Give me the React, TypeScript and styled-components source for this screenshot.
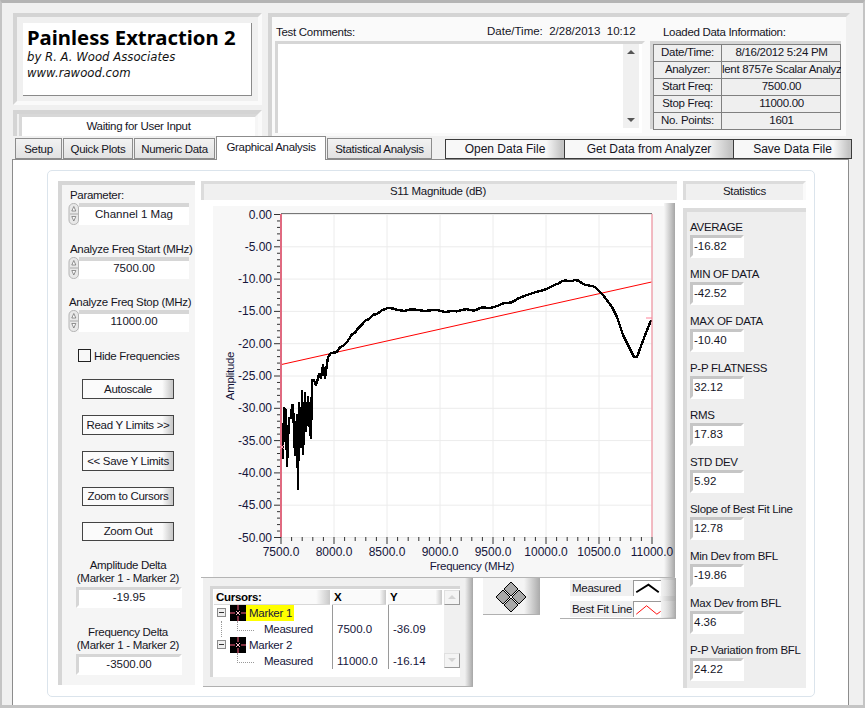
import React from 'react'
import styled, { createGlobalStyle } from 'styled-components'

const GlobalStyle = createGlobalStyle`
  html, body { margin: 0; padding: 0; background: #f0f0f0; }
  * { box-sizing: border-box; }
  body { font-family: "Liberation Sans", Arial, sans-serif; font-size: 11.5px; letter-spacing: -0.3px; color: #15151f; }
`

const Window = styled.div`
  width: 865px;
  height: 708px;
  overflow: hidden;
  background: #f0f0f0;
  border-top: 3px solid #b4b4b4;
  border-left: 2px solid #c4c4c4;
  border-right: 2px solid #c4c4c4;
  border-bottom: 3px solid #c4c4c4;
  padding: 10px 0 0 10px;
  display: flex;
  flex-direction: column;
`

const TopRow = styled.div`
  display: flex;
  gap: 6px;
  height: 123px;
  margin-left: 1px;
`

const LeftStack = styled.div`
  width: 249px;
  display: flex;
  flex-direction: column;
  gap: 5px;
`

const LogoPanel = styled.div`
  height: 92px;
  border: 4px solid;
  border-color: #d4d4d4 #fafafa #fafafa #d4d4d4;
  padding: 6px 6px 5px 6px;
`

const LogoCard = styled.div`
  height: 100%;
  background: #fff;
  border-right: 1px solid #8a8a8a;
  border-bottom: 1px solid #8a8a8a;
  padding: 2px 4px;
`

const LogoTitle = styled.div`
  font-family: "Noto Sans", sans-serif;
  font-weight: 700;
  font-size: 20.3px;
  letter-spacing: 0;
  height: 24px;
  line-height: 24px;
  color: #000;
  white-space: nowrap;
`

const LogoLine = styled.div`
  font-family: "DejaVu Sans", sans-serif;
  font-style: italic;
  font-size: 11.7px;
  letter-spacing: 0;
  line-height: 16px;
  color: #111;
`

const StatusPanel = styled.div`
  flex: 1;
  border: 4px solid;
  border-bottom-width: 0;
  border-color: #d4d4d4 #fafafa #fafafa #d4d4d4;
  padding-left: 2px;
`

const StatusField = styled.div`
  height: 100%;
  background: #fff;
  border: 3px solid;
  border-bottom-width: 0;
  border-color: #d8d8d8 #f6f6f6 #fff #d8d8d8;
  text-align: center;
  line-height: 18px;
`

const InfoPanel = styled.div`
  width: 582px;
  background: #fafafa;
  border: 4px solid;
  border-bottom-width: 0;
  border-color: #d4d4d4 #f0f0f0 #f0f0f0 #d4d4d4;
  padding: 3px 5px 0 3px;
`

const InfoHeader = styled.div`
  display: flex;
  height: 21px;
  align-items: center;
`

const CommentsLabel = styled.span`
  width: 211px;
  margin-left: 1px;
  padding-top: 3px;
`

const DateStamp = styled.span`
  width: 176px;
  letter-spacing: 0;
  white-space: pre;
`

const LoadedLabel = styled.span`
  padding-top: 3px;
`

const InfoBody = styled.div`
  display: flex;
  gap: 5px;
`

const Comments = styled.div`
  width: 370px;
  height: 92px;
  background: #fff;
  border: 3px solid;
  border-bottom-width: 0;
  border-color: #d6d6d6 #fafafa #fff #d6d6d6;
  display: flex;
  justify-content: flex-end;
  padding-right: 3px;
`

const CommentScroll = styled.div`
  width: 16px;
  height: 84px;
  background: #f0f0f0;
  display: flex;
  flex-direction: column;
  justify-content: space-between;
  align-items: center;
  padding: 6px 0;
`

const ArrowUp = styled.i<{ $pale?: boolean }>`
  width: 0;
  height: 0;
  border-left: 4px solid transparent;
  border-right: 4px solid transparent;
  border-bottom: 4px solid ${p => (p.$pale ? '#d4d4d4' : '#555')};
`

const ArrowDown = styled.i<{ $pale?: boolean }>`
  width: 0;
  height: 0;
  border-left: 4px solid transparent;
  border-right: 4px solid transparent;
  border-top: 4px solid ${p => (p.$pale ? '#d4d4d4' : '#555')};
`

const InfoTableFrame = styled.div`
  width: 191px;
  height: 88px;
  border: 3px solid;
  border-right-width: 0;
  border-bottom-width: 0;
  border-color: #d6d6d6 transparent transparent #d6d6d6;
`

const InfoTable = styled.div`
  display: grid;
  grid-template-columns: 68px 120px;
  grid-auto-rows: 17px;
  background: #efefef;
  border-bottom: 1px solid #808080;
  border-right: 1px solid #808080;
`

const InfoCell = styled.div`
  border-top: 1px solid #808080;
  border-left: 1px solid #808080;
  text-align: center;
  line-height: 15px;
  white-space: nowrap;
  overflow: hidden;
`

const TabRow = styled.div`
  display: flex;
  height: 23px;
  padding-left: 3px;
  align-items: flex-end;
`

const Tab = styled.div<{ $active?: boolean; $w: number }>`
  width: ${p => p.$w}px;
  height: ${p => (p.$active ? 24 : 21)}px;
  margin-right: 1px;
  margin-bottom: ${p => (p.$active ? -1 : 0)}px;
  background: ${p => (p.$active ? '#fff' : 'linear-gradient(#f2f2f2, #e2e2e2)')};
  border: 1px solid #8c8c8c;
  border-bottom-width: ${p => (p.$active ? 0 : 1)}px;
  text-align: center;
  line-height: 20px;
  position: relative;
  z-index: ${p => (p.$active ? 2 : 0)};
`

const FileButtons = styled.div`
  display: flex;
  margin-left: 12px;
  height: 20px;
  position: relative;
  z-index: 3;
`

const FileButton = styled.div<{ $w: number }>`
  width: ${p => p.$w}px;
  background: linear-gradient(90deg, #f8f8f8 85%, #c4c4c4 98%);
  border: 1px solid #3c3c3c;
  margin-right: -1px;
  text-align: center;
  font-size: 12px;
  letter-spacing: 0;
  line-height: 19px;
`

const TabPage = styled.div`
  width: 837px;
  height: 547px;
  background: #fff;
  border: 1px solid #8c8c8c;
  border-bottom: 0;
  padding: 10px 33px 0 34px;
`

const InnerFrame = styled.div`
  height: 527px;
  border: 1px solid #dbe4ec;
  border-radius: 5px;
  padding: 10px 9px 0 10px;
  display: grid;
  grid-template-columns: 137px 476px 123px;
  column-gap: 6px;
`

const ControlColumn = styled.div`
  height: 504px;
  background: #f5f5f5;
  border-top: 4px solid #d6d6d6;
  border-left: 4px solid #d6d6d6;
  padding: 3px 0 0 6px;
  display: flex;
  flex-direction: column;
`

const ControlLabel = styled.div<{ $mt?: number; $ml?: number }>`
  height: 15px;
  line-height: 15px;
  margin-top: ${p => p.$mt ?? 0}px;
  margin-left: ${p => p.$ml ?? 2}px;
  white-space: nowrap;
`

const RingControl = styled.div`
  display: flex;
  height: 22px;
`

const RingValue = styled.div`
  width: 110px;
  background: #fff;
  border-top: 4px solid #d6d6d6;
  text-align: center;
  line-height: 15px;
  margin-left: -1px;
  letter-spacing: 0;
`

const CheckRow = styled.label`
  display: flex;
  align-items: center;
  margin: 17px 0 0 10px;
  height: 14px;
  white-space: nowrap;
`

const CheckBox = styled.i`
  width: 13px;
  height: 13px;
  border: 1px solid #222;
  background: #f8f8f8;
  margin-right: 3px;
`

const SideButton = styled.div<{ $mt: number; $h?: number }>`
  width: 92px;
  height: ${p => p.$h ?? 20}px;
  margin: ${p => p.$mt}px 0 0 14px;
  border: 1px solid #444;
  background: linear-gradient(90deg, #fbfbfb 88%, #c9c9c9 99%);
  text-align: center;
  line-height: ${p => (p.$h ?? 20) - 2}px;
  white-space: nowrap;
`

const DeltaLabel = styled.div<{ $mt: number }>`
  margin-top: ${p => p.$mt}px;
  width: 120px;
  text-align: center;
  line-height: 13px;
  white-space: nowrap;
`

const DeltaField = styled.div`
  width: 106px;
  height: 21px;
  margin: 2px 0 0 8px;
  background: #fff;
  border: 3px solid;
  border-color: #d6d6d6 #fff #fff #d6d6d6;
  text-align: center;
  line-height: 15px;
  letter-spacing: 0;
`

const CenterColumn = styled.div`
  display: flex;
  flex-direction: column;
`

const TitleBar = styled.div<{ $pr?: number }>`
  height: 19px;
  background: #f0f0f0;
  border-top: 3px solid #dcdcdc;
  border-left: 3px solid #dcdcdc;
  padding-right: ${p => p.$pr ?? 0}px;
  text-align: center;
  line-height: 15px;
`

const PlotSvg = styled.svg`
  display: block;
  margin-top: 3px;
  font-family: "Liberation Sans", Arial, sans-serif;
  font-size: 12px;
  letter-spacing: 0;
  fill: #15153a;
`

const AxisTitle = styled.text`
  font-size: 11.5px;
  letter-spacing: -0.3px;
`

const BottomRow = styled.div`
  display: flex;
  margin-left: 2px;
`

const CursorPanel = styled.div`
  width: 270px;
  height: 109px;
  background: linear-gradient(90deg, #f0f0f0 97%, #a6a6a6 100%);
  border-bottom: 1px solid #b0b0b0;
  padding: 8px 13px 9px 7px;
`

const CursorBox = styled.div`
  height: 100%;
  background: #fff;
  border-top: 3px solid #d6d6d6;
  border-left: 3px solid #d6d6d6;
  display: flex;
  padding: 1px 0 0 1px;
`

const CursorTable = styled.div`
  width: 230px;
  display: grid;
  grid-template-columns: 118px 56px 56px;
  grid-template-rows: 15px repeat(4, 16px);
`

const HeaderCell = styled.div`
  background: linear-gradient(90deg, #fafafa 88%, #c8c8c8 100%);
  border-bottom: 1px solid #d8d8d8;
  font-weight: 700;
  line-height: 14px;
  padding-left: 2px;
  margin-right: 2px;
  color: #000;
`

const TreeCell = styled.div`
  display: flex;
  align-items: center;
  height: 16px;
  color: #15153a;
  white-space: nowrap;
`

const ValueCell = styled.div`
  border-left: 1px solid #9a9a9a;
  padding-left: 4px;
  line-height: 16px;
  height: 16px;
  letter-spacing: 0;
  color: #15153a;
`

const Expander = styled.i`
  width: 9px;
  height: 9px;
  border: 1px solid #8a8a8a;
  background: #eee;
  margin: 0 4px 0 3px;
  display: flex;
  align-items: center;
  justify-content: center;
  &::before {
    content: '';
    width: 5px;
    height: 1px;
    background: #333;
  }
`

const Rail = styled.i<{ $show?: boolean }>`
  width: 16px;
  height: 16px;
  margin-left: 7px;
  border-left: 1px dotted ${p => (p.$show ? '#999' : 'transparent')};
`

const Connector = styled.i`
  width: 17px;
  height: 10px;
  margin: -6px 10px 0 0;
  border-left: 1px dotted #999;
  border-bottom: 1px dotted #999;
`

const MarkerName = styled.span<{ $on?: boolean }>`
  background: ${p => (p.$on ? '#ffff00' : 'transparent')};
  padding: 0 2px 0 3px;
  line-height: 16px;
`

const CursorScroll = styled.div`
  width: 16px;
  height: 78px;
  background: #f0f0f0;
  display: flex;
  flex-direction: column;
  justify-content: space-between;
  align-items: center;
`

const ScrollCap = styled.div`
  width: 16px;
  height: 15px;
  background: #f4f4f4;
  border: 1px solid #e0e0e0;
  border-right-color: #999;
  border-bottom-color: #999;
  display: flex;
  align-items: center;
  justify-content: center;
`

const PadButton = styled.div`
  width: 57px;
  height: 37px;
  margin-left: 10px;
  background: linear-gradient(90deg, #f4f4f4 72%, #aaa 100%);
  border-bottom: 1px solid #b0b0b0;
  display: flex;
  justify-content: center;
  padding-right: 2px;
`

const Legend = styled.div`
  width: 116px;
  height: 41px;
  margin-left: 20px;
  background: linear-gradient(90deg, #fff 85%, #a6a6a6 100%);
  border-bottom: 1px solid #b0b0b0;
  padding: 2px 0 0 10px;
  display: flex;
  flex-direction: column;
  gap: 5px;
`

const LegendRow = styled.div`
  display: flex;
  height: 16px;
  align-items: center;
  white-space: nowrap;
  background: linear-gradient(90deg, #f0f0f0 80%, transparent 100%);
`

const LegendName = styled.span`
  width: 63px;
  padding-left: 2px;
`

const Swatch = styled.svg`
  display: block;
  border-top: 1px solid #999;
  border-left: 1px solid #999;
  background: #fff;
`

const StatsColumn = styled.div`
  display: flex;
  flex-direction: column;
`

const StatsTitle = styled(TitleBar)`
  margin-bottom: 8px;
  border-right: 3px solid #fafafa;
`

const StatsPanel = styled.div`
  height: 480px;
  background: #eee;
  border-top: 4px solid #dcdcdc;
  border-left: 4px solid #dcdcdc;
  padding: 8px 0 0 3px;
`

const StatLabel = styled.div`
  height: 15px;
  line-height: 15px;
  white-space: nowrap;
`

const StatField = styled.div`
  width: 54px;
  height: 23px;
  margin-bottom: 9px;
  background: #fff;
  border: 3px solid;
  border-color: #c6c6c6 #fff #fff #c6c6c6;
  padding-left: 1px;
  line-height: 17px;
  letter-spacing: 0;
`

const yTicks = Array.from({ length: 51 }, (_, i) => i)
const xTicks = Array.from({ length: 36 }, (_, i) => i)
const yPos = (db: number) => 214.5 + db * 6.46
const xPos = (i: number) => 281 + i * 10.6

const noisy = [
  [282, 430], [283, 458], [284, 408], [286, 410], [287, 466], [289, 418], [291, 418], [292, 405], [293, 405],
  [295, 455], [297, 415], [298, 489], [299, 403], [301, 447], [302, 391], [303, 454], [305, 393], [306, 431],
  [308, 397], [310, 432], [311, 438], [312, 380], [314, 380], [316, 385], [318, 378], [319, 374], [321, 378],
  [323, 365], [325, 378], [328, 357], [331, 353], [332, 353], [337, 352],
]
const smooth = [
  [340, 347], [343, 346], [347, 342], [352, 335], [355, 333], [358, 328], [361, 325], [366, 320], [369, 319],
  [373, 315], [377, 314], [382, 311], [387, 309], [394, 308], [400, 310], [405, 310], [412, 310],
  [430, 310], [443, 311], [450, 312], [460, 310], [473, 310],
  [483, 308], [493, 307], [498, 305], [508, 303], [518, 299], [535, 293], [547, 288], [555, 284],
  [565, 281], [575, 280], [582, 283], [595, 287], [603, 295], [612, 307], [617, 317], [623, 335], [634, 357], [637, 357],
  [644, 338], [651, 320],
]

// small ripple on the flat part of the trace, the data is never quite smooth
const rippled: number[][] = []
smooth.forEach((p, i) => {
  const next = smooth[i + 1]
  if (!next) {
    rippled.push(p)
    return
  }
  const steps = Math.max(1, Math.round((next[0] - p[0]) / 3))
  for (let s = 0; s < steps; s++) {
    const x = p[0] + ((next[0] - p[0]) * s) / steps
    const y = p[1] + ((next[1] - p[1]) * s) / steps
    const jitter = x < 590 ? Math.sin(x * 2.3) * 0.8 : 0
    rippled.push([x, y + jitter])
  }
})
const trace = [...noisy, ...rippled].map(p => p.join(',')).join(' ')

function Spinner() {
  return (
    <svg width="12" height="22" viewBox="0 0 12 22" style={{ flex: 'none' }}>
      <rect x="1" y="0.5" width="9.5" height="21" rx="4.5" fill="#e8e8e8" stroke="#b4b4b4" />
      <path d="M5.8 3.5 3.8 8h4zM5.8 18 3.8 13.5h4z" fill="#fff" stroke="#666" strokeWidth="0.7" />
      <line x1="2" y1="11" x2="10" y2="11" stroke="#aaa" />
    </svg>
  )
}

function MarkerIcon() {
  return (
    <svg width="16" height="16" viewBox="0 0 16 16" style={{ flex: 'none' }}>
      <rect width="16" height="16" fill="#000" />
      <path d="M8 0v5M8 11v5M0 8h5M11 8h5" stroke="#ff6080" />
      <path d="M6 6l4 4M10 6l-4 4" stroke="#ffc0cc" />
    </svg>
  )
}

function Plot() {
  return (
    <PlotSvg width="476" height="375" viewBox="201 203 476 375">
      <rect x="201" y="203" width="476" height="375" fill="#fff" />
      <rect x="213" y="206" width="464" height="372" fill="#f7f7f7" />
      <defs>
        <linearGradient id="edge" x1="0" x2="1" y1="0" y2="0">
          <stop offset="0" stopColor="#f7f7f7" />
          <stop offset="1" stopColor="#a6a6a6" />
        </linearGradient>
      </defs>
      <rect x="664" y="203" width="11" height="375" fill="url(#edge)" />
      <rect x="675" y="203" width="2" height="375" fill="#fff" />
      <rect x="201" y="577" width="474" height="1" fill="#b4b4b4" />
      <rect x="281" y="214" width="371" height="323" fill="#fff" />
      {Array.from({ length: 11 }, (_, i) => (
        <line key={i} x1="281" x2="652" y1={yPos(i * 5)} y2={yPos(i * 5)} stroke="#ececec" />
      ))}
      {Array.from({ length: 8 }, (_, i) => (
        <line key={i} x1={281 + i * 53} x2={281 + i * 53} y1="214" y2="537" stroke="#ececec" />
      ))}
      <line x1="281" x2="652" y1="213.5" y2="213.5" stroke="#777" />
      {yTicks.map(i => (
        <line key={i} x1={i % 5 === 0 ? 274 : 277} x2="281" y1={yPos(i)} y2={yPos(i)} stroke="#333" />
      ))}
      {xTicks.map(i => (
        <line key={i} x1={xPos(i)} x2={xPos(i)} y1="537" y2={i % 5 === 0 ? 544 : 541} stroke="#333" />
      ))}
      {Array.from({ length: 11 }, (_, i) => (
        <text key={i} x="272" y={yPos(i * 5) + 4} textAnchor="end">
          {i === 0 ? '0.00' : `-${(i * 5).toFixed(2)}`}
        </text>
      ))}
      {Array.from({ length: 8 }, (_, i) => (
        <text key={i} x={281 + i * 53} y="556" textAnchor="middle">
          {(7500 + i * 500).toFixed(1)}
        </text>
      ))}
      <AxisTitle x="472" y="570" textAnchor="middle">Frequency (MHz)</AxisTitle>
      <AxisTitle transform="translate(234 376) rotate(-90)" textAnchor="middle">Amplitude</AxisTitle>
      <line x1="281.5" x2="651.5" y1="364.5" y2="282" stroke="#ff0000" strokeWidth="1" />
      <polyline points={trace} fill="none" stroke="#000" strokeWidth="2.4" strokeLinejoin="round" shapeRendering="crispEdges" />
      <line x1="281" x2="281" y1="214" y2="537" stroke="#e06a80" strokeWidth="2" />
      <line x1="652" x2="652" y1="214" y2="537" stroke="#f08090" />
      <path d="M280 445l4 4M284 445l-4 4" stroke="#ff9ab0" />
      <path d="M646 318h6" stroke="#ff8098" />
    </PlotSvg>
  )
}

const stats = [
  ['AVERAGE', '-16.82'],
  ['MIN OF DATA', '-42.52'],
  ['MAX OF DATA', '-10.40'],
  ['P-P FLATNESS', '32.12'],
  ['RMS', '17.83'],
  ['STD DEV', '5.92'],
  ['Slope of Best Fit Line', '12.78'],
  ['Min Dev from BFL', '-19.86'],
  ['Max Dev from BFL', '4.36'],
  ['P-P Variation from BFL', '24.22'],
]

const loaded = [
  ['Date/Time:', '8/16/2012 5:24 PM'],
  ['Analyzer:', 'lent 8757e Scalar Analyz'],
  ['Start Freq:', '7500.00'],
  ['Stop Freq:', '11000.00'],
  ['No. Points:', '1601'],
]

export default function App() {
  return (
    <Window>
      <GlobalStyle />
      <TopRow>
        <LeftStack>
          <LogoPanel>
            <LogoCard>
              <LogoTitle>Painless Extraction 2</LogoTitle>
              <LogoLine>by R. A. Wood Associates</LogoLine>
              <LogoLine>www.rawood.com</LogoLine>
            </LogoCard>
          </LogoPanel>
          <StatusPanel>
            <StatusField>Waiting for User Input</StatusField>
          </StatusPanel>
        </LeftStack>
        <InfoPanel>
          <InfoHeader>
            <CommentsLabel>Test Comments:</CommentsLabel>
            <DateStamp>Date/Time:  2/28/2013  10:12</DateStamp>
            <LoadedLabel>Loaded Data Information:</LoadedLabel>
          </InfoHeader>
          <InfoBody>
            <Comments>
              <CommentScroll>
                <ArrowUp />
                <ArrowDown />
              </CommentScroll>
            </Comments>
            <InfoTableFrame>
              <InfoTable>
                {loaded.map(([k, v]) => (
                  <React.Fragment key={k}>
                    <InfoCell>{k}</InfoCell>
                    <InfoCell>{v}</InfoCell>
                  </React.Fragment>
                ))}
              </InfoTable>
            </InfoTableFrame>
          </InfoBody>
        </InfoPanel>
      </TopRow>
      <TabRow>
        <Tab $w={47}>Setup</Tab>
        <Tab $w={70}>Quick Plots</Tab>
        <Tab $w={81}>Numeric Data</Tab>
        <Tab $w={110} $active>Graphical Analysis</Tab>
        <Tab $w={105}>Statistical Analysis</Tab>
        <FileButtons>
          <FileButton $w={120}>Open Data File</FileButton>
          <FileButton $w={170}>Get Data from Analyzer</FileButton>
          <FileButton $w={119}>Save Data File</FileButton>
        </FileButtons>
      </TabRow>
      <TabPage>
        <InnerFrame>
          <ControlColumn>
            <ControlLabel>Parameter:</ControlLabel>
            <RingControl>
              <Spinner />
              <RingValue>Channel 1 Mag</RingValue>
            </RingControl>
            <ControlLabel $mt={17} $ml={2}>Analyze Freq Start (MHz)</ControlLabel>
            <RingControl>
              <Spinner />
              <RingValue>7500.00</RingValue>
            </RingControl>
            <ControlLabel $mt={16} $ml={1}>Analyze Freq Stop (MHz)</ControlLabel>
            <RingControl>
              <Spinner />
              <RingValue>11000.00</RingValue>
            </RingControl>
            <CheckRow>
              <CheckBox />
              Hide Frequencies
            </CheckRow>
            <SideButton $mt={16}>Autoscale</SideButton>
            <SideButton $mt={16}>Read Y Limits &gt;&gt;</SideButton>
            <SideButton $mt={16}>&lt;&lt; Save Y Limits</SideButton>
            <SideButton $mt={16} $h={19}>Zoom to Cursors</SideButton>
            <SideButton $mt={16} $h={19}>Zoom Out</SideButton>
            <DeltaLabel $mt={18}>Amplitude Delta<br />(Marker 1 - Marker 2)</DeltaLabel>
            <DeltaField>-19.95</DeltaField>
            <DeltaLabel $mt={18}>Frequency Delta<br />(Marker 1 - Marker 2)</DeltaLabel>
            <DeltaField>-3500.00</DeltaField>
          </ControlColumn>
          <CenterColumn>
            <TitleBar $pr={5}>S11 Magnitude (dB)</TitleBar>
            <Plot />
            <BottomRow>
              <CursorPanel>
                <CursorBox>
                  <CursorTable>
                    <HeaderCell>Cursors:</HeaderCell>
                    <HeaderCell>X</HeaderCell>
                    <HeaderCell>Y</HeaderCell>
                    <TreeCell><Expander /><MarkerIcon /><MarkerName $on>Marker 1</MarkerName></TreeCell>
                    <ValueCell />
                    <ValueCell />
                    <TreeCell><Rail $show /><Connector />Measured</TreeCell>
                    <ValueCell>7500.0</ValueCell>
                    <ValueCell>-36.09</ValueCell>
                    <TreeCell><Expander /><MarkerIcon /><MarkerName>Marker 2</MarkerName></TreeCell>
                    <ValueCell />
                    <ValueCell />
                    <TreeCell><Rail /><Connector />Measured</TreeCell>
                    <ValueCell>11000.0</ValueCell>
                    <ValueCell>-16.14</ValueCell>
                  </CursorTable>
                  <CursorScroll>
                    <ScrollCap><ArrowUp $pale /></ScrollCap>
                    <ScrollCap><ArrowDown $pale /></ScrollCap>
                  </CursorScroll>
                </CursorBox>
              </CursorPanel>
              <PadButton>
                <svg width="32" height="32" viewBox="0 0 32 32" style={{ marginTop: 3 }}>
                  <g fill="#a8a8a8" stroke="#000" strokeWidth="1">
                    <path d="M16 1l7 7-7 7-7-7z" />
                    <path d="M8 9l7 7-7 7-7-7z" />
                    <path d="M24 9l7 7-7 7-7-7z" />
                    <path d="M16 17l7 7-7 7-7-7z" />
                  </g>
                </svg>
              </PadButton>
              <Legend>
                <LegendRow>
                  <LegendName>Measured</LegendName>
                  <Swatch width="28" height="16" viewBox="0 0 28 16">
                    <path d="M2 12l13-8 11 8" fill="none" stroke="#000" strokeWidth="2" />
                  </Swatch>
                </LegendRow>
                <LegendRow>
                  <LegendName>Best Fit Line</LegendName>
                  <Swatch width="28" height="16" viewBox="0 0 28 16">
                    <path d="M2 13l11-9 11 9 4-3" fill="none" stroke="#ff0000" />
                  </Swatch>
                </LegendRow>
              </Legend>
            </BottomRow>
          </CenterColumn>
          <StatsColumn>
            <StatsTitle>Statistics</StatsTitle>
            <StatsPanel>
              {stats.map(([k, v]) => (
                <React.Fragment key={k}>
                  <StatLabel>{k}</StatLabel>
                  <StatField>{v}</StatField>
                </React.Fragment>
              ))}
            </StatsPanel>
          </StatsColumn>
        </InnerFrame>
      </TabPage>
    </Window>
  )
}
